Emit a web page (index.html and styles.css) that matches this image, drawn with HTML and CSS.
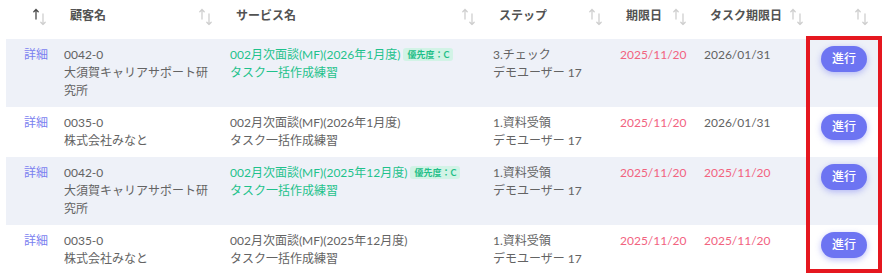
FILE: index.html
```html
<!DOCTYPE html>
<html lang="ja">
<head>
<meta charset="utf-8">
<title>タスク一覧</title>
<link rel="stylesheet" href="styles.css">
</head>
<body>
<div class="wrap">
  <table class="tasks">
    <colgroup>
      <col class="w-detail"><col class="w-client"><col class="w-service"><col class="w-step"><col class="w-due"><col class="w-taskdue"><col class="w-action">
    </colgroup>
    <thead>
      <tr>
        <th class="th-detail"><div class="th-in"><svg class="sort" width="14" height="18" viewBox="0 0 14 18"><path class="up active" d="M3 11V1.5M0.8 3.8L3 1.5L5.2 3.8"/><path class="down" d="M10 6V16.5M7.8 14.2L10 16.5L12.2 14.2"/></svg></div></th>
        <th><div class="th-in"><span>顧客名</span><svg class="sort" width="14" height="18" viewBox="0 0 14 18"><path class="up" d="M3 11V1.5M0.8 3.8L3 1.5L5.2 3.8"/><path class="down" d="M10 6V16.5M7.8 14.2L10 16.5L12.2 14.2"/></svg></div></th>
        <th><div class="th-in"><span>サービス名</span><svg class="sort" width="14" height="18" viewBox="0 0 14 18"><path class="up" d="M3 11V1.5M0.8 3.8L3 1.5L5.2 3.8"/><path class="down" d="M10 6V16.5M7.8 14.2L10 16.5L12.2 14.2"/></svg></div></th>
        <th><div class="th-in"><span>ステップ</span><svg class="sort" width="14" height="18" viewBox="0 0 14 18"><path class="up" d="M3 11V1.5M0.8 3.8L3 1.5L5.2 3.8"/><path class="down" d="M10 6V16.5M7.8 14.2L10 16.5L12.2 14.2"/></svg></div></th>
        <th><div class="th-in"><span>期限日</span><svg class="sort" width="14" height="18" viewBox="0 0 14 18"><path class="up" d="M3 11V1.5M0.8 3.8L3 1.5L5.2 3.8"/><path class="down" d="M10 6V16.5M7.8 14.2L10 16.5L12.2 14.2"/></svg></div></th>
        <th class="th-taskdue"><div class="th-in"><span>タスク期限日</span><svg class="sort" width="14" height="18" viewBox="0 0 14 18"><path class="up" d="M3 11V1.5M0.8 3.8L3 1.5L5.2 3.8"/><path class="down" d="M10 6V16.5M7.8 14.2L10 16.5L12.2 14.2"/></svg></div></th>
        <th class="th-action"><div class="th-in"><svg class="sort" width="14" height="18" viewBox="0 0 14 18"><path class="up" d="M3 11V1.5M0.8 3.8L3 1.5L5.2 3.8"/><path class="down" d="M10 6V16.5M7.8 14.2L10 16.5L12.2 14.2"/></svg></div></th>
      </tr>
    </thead>
    <tbody>
      <tr class="alt">
        <td class="c-detail"><a class="link">詳細</a></td>
        <td>0042-0<br>大須賀キャリアサポート研究所</td>
        <td class="green"><span class="nowrap">002月次面談(MF)(2026年1月度)<span class="badge">優先度：C</span></span><br>タスク一括作成練習</td>
        <td>3.チェック<br>デモユーザー 17</td>
        <td class="red">2025/11/20</td>
        <td>2026/01/31</td>
        <td class="c-action"><span class="btn">進行</span></td>
      </tr>
      <tr>
        <td class="c-detail"><a class="link">詳細</a></td>
        <td>0035-0<br>株式会社みなと</td>
        <td>002月次面談(MF)(2026年1月度)<br>タスク一括作成練習</td>
        <td>1.資料受領<br>デモユーザー 17</td>
        <td class="red">2025/11/20</td>
        <td>2026/01/31</td>
        <td class="c-action"><span class="btn">進行</span></td>
      </tr>
      <tr class="alt">
        <td class="c-detail"><a class="link">詳細</a></td>
        <td>0042-0<br>大須賀キャリアサポート研究所</td>
        <td class="green"><span class="nowrap">002月次面談(MF)(2025年12月度)<span class="badge">優先度：C</span></span><br>タスク一括作成練習</td>
        <td>1.資料受領<br>デモユーザー 17</td>
        <td class="red">2025/11/20</td>
        <td class="red">2025/11/20</td>
        <td class="c-action"><span class="btn">進行</span></td>
      </tr>
      <tr>
        <td class="c-detail"><a class="link">詳細</a></td>
        <td>0035-0<br>株式会社みなと</td>
        <td>002月次面談(MF)(2025年12月度)<br>タスク一括作成練習</td>
        <td>1.資料受領<br>デモユーザー 17</td>
        <td class="red">2025/11/20</td>
        <td class="red">2025/11/20</td>
        <td class="c-action"><span class="btn">進行</span></td>
      </tr>
    </tbody>
  </table>
</div>
<div class="highlight"></div>
</body>
</html>
```
FILE: styles.css
```css
html, body {
  margin: 0;
  padding: 0;
  background: #ffffff;
}
body {
  font-family: Lato, "Noto Sans CJK JP", sans-serif;
  font-size: 12px;
  line-height: 18px;
  color: #636363;
  overflow: hidden;
}
.wrap {
  padding-left: 6px;
}
.tasks {
  width: 872px;
  table-layout: fixed;
  border-collapse: collapse;
  border-spacing: 0;
}
.w-detail { width: 50px; }
.w-client { width: 166px; }
.w-service { width: 263px; }
.w-step { width: 127px; }
.w-due { width: 84px; }
.w-taskdue { width: 110px; }
.w-action { width: 72px; }

th {
  padding: 7px 9px 14px 14px;
  text-align: left;
  font-weight: 700;
  color: #525252;
  vertical-align: top;
}
.th-in {
  display: flex;
  justify-content: space-between;
  align-items: center;
  height: 18px;
}
.th-detail { padding-left: 27px; }
.th-detail .th-in { justify-content: flex-start; }
.th-taskdue { padding-right: 2px; }
.th-action .th-in { justify-content: flex-end; }
.sort { flex: none; display: block; margin-top: 2px; }
.sort path {
  fill: none;
  stroke: #cfcfcf;
  stroke-width: 1.3;
  stroke-linecap: round;
  stroke-linejoin: round;
}
.sort path.active { stroke: #4a4a4a; }

td {
  padding: 7px 8px 7px 8px;
  vertical-align: top;
  word-break: break-all;
}
tr.alt td { background: #eef1f8; }
.c-detail { padding-left: 18px; }
.link { color: #7b7ff0; cursor: pointer; }
.green { color: #1fc28c; }
.red { color: #f2637f; }
.nowrap { white-space: nowrap; }
.badge {
  display: inline-block;
  margin-left: 3px;
  padding: 0 4px;
  height: 13px;
  line-height: 13px;
  font-size: 9px;
  font-weight: 700;
  color: #1fbf88;
  background: #d2f3e6;
  border-radius: 3px;
  vertical-align: 1px;
}
.c-action { padding-left: 15px; }
.btn {
  display: block;
  width: 46px;
  height: 26px;
  line-height: 26px;
  text-align: center;
  border-radius: 13px;
  background: #6d74f2;
  color: #ffffff;
  font-weight: 500;
  box-shadow: 0 2px 6px rgba(109, 116, 242, 0.45);
}
.highlight {
  position: absolute;
  left: 806px;
  top: 36px;
  width: 76px;
  height: 237px;
  box-sizing: border-box;
  border: 4px solid #e5171f;
  pointer-events: none;
}
```
